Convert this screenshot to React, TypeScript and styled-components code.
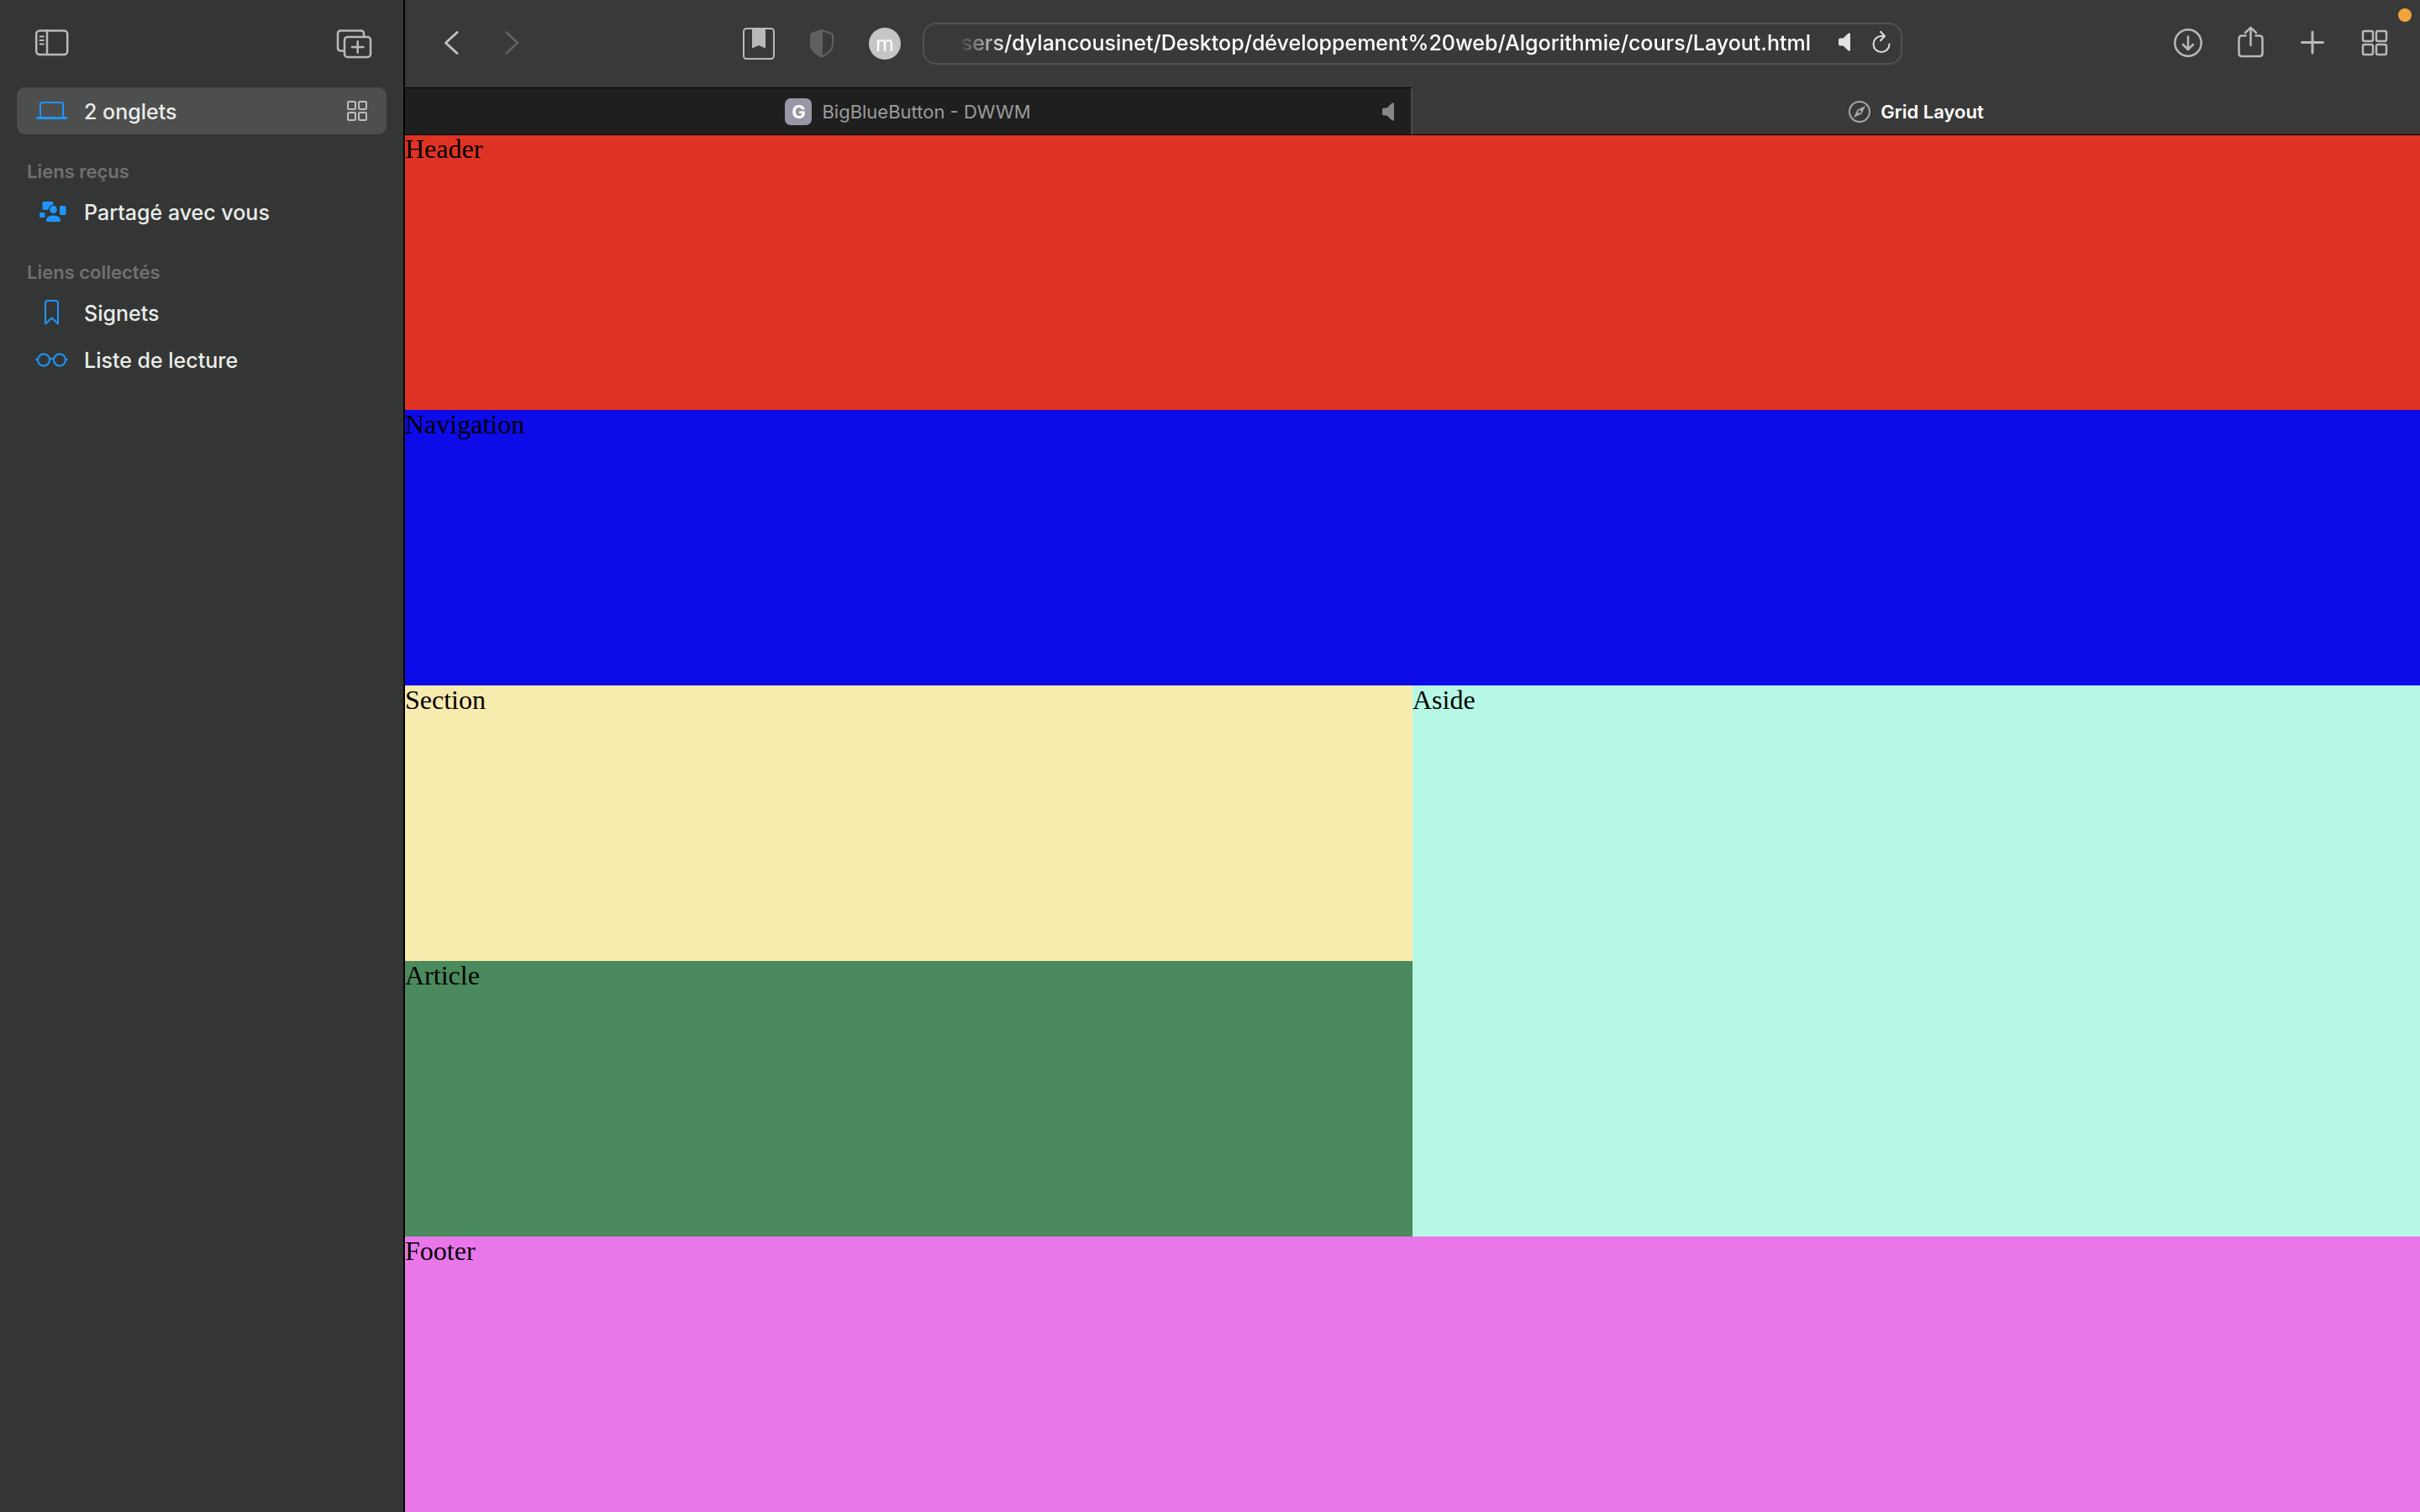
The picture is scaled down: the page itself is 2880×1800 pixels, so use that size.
import React from "react";
import styled, { createGlobalStyle } from "styled-components";

const sans = `Inter, "Liberation Sans", sans-serif`;
const serif = `"Liberation Serif", "Times New Roman", serif`;

const GlobalStyle = createGlobalStyle`
  * { box-sizing: border-box; }
  body { margin: 0; background: #343635; font-family: ${sans}; }
  button { appearance: none; border: 0; padding: 0; background: none; font: inherit; }
  a { color: inherit; text-decoration: none; }
  svg { display: block; flex: none; overflow: visible; }
`;

const Window = styled.div`
  display: grid;
  grid-template-columns: 482px minmax(0, 1fr);
  min-height: 100vh;
`;

const Sidebar = styled.aside`
  border-right: 2px solid #000;
  background: #343635;
  color: #ebecea;
`;

const SidebarTools = styled.div`
  display: flex;
  align-items: center;
  justify-content: space-between;
  height: 104px;
  padding: 0 37px 0 42px;
`;

const SidebarRow = styled.div<{ $selected?: boolean }>`
  display: flex;
  align-items: center;
  height: 56px;
  margin: 0 20px;
  padding: 0 23px 0 22px;
  border-radius: 10px;
  background: ${(p) => (p.$selected ? "#4d4f4e" : "transparent")};
`;

const RowLink = styled.a`
  display: flex;
  flex: 1;
  align-items: center;
  gap: 18px;
  font-size: 25px;
  line-height: 32px;
  font-weight: 500;
`;

const RowLabel = styled.span`
  padding-top: 2px;
`;

const SectionTitle = styled.h2`
  margin: 24px 0 0;
  padding: 0 32px;
  font-size: 22px;
  line-height: 40px;
  font-weight: 600;
  color: #6f716f;
`;

const Main = styled.div`
  display: flex;
  flex-direction: column;
  min-width: 0;
`;

const Toolbar = styled.header`
  display: grid;
  grid-template-columns: minmax(0, 1fr) minmax(0, 1166px) minmax(0, 1fr);
  align-items: center;
  height: 104px;
  background: #393939;
  position: relative;
`;

const LeftTools = styled.div`
  display: flex;
  justify-content: space-between;
  padding: 0 25px 0 35px;
`;

const RightTools = styled.div`
  display: flex;
  justify-content: flex-end;
  gap: 34px;
  padding-right: 34px;
`;

const ToolGroup = styled.div<{ $gap: number }>`
  display: flex;
  gap: ${(p) => p.$gap}px;
`;

const ToolButton = styled.button<{ $color?: string }>`
  display: flex;
  color: ${(p) => p.$color ?? "#b9b9b9"};
`;

const ProfileButton = styled.button`
  width: 38px;
  height: 38px;
  margin: 1px;
  border-radius: 50%;
  background: #c6c6c6;
  color: #fff;
  font-size: 25px;
  line-height: 32px;
  text-align: center;
`;

const AddressField = styled.form`
  display: flex;
  align-items: center;
  height: 50px;
  padding: 0 8px 0 36px;
  border: 2px solid #515151;
  border-radius: 16px;
`;

const AddressInput = styled.input`
  flex: 1;
  min-width: 0;
  height: 46px;
  padding: 0 0 2px;
  border: 0;
  outline: 0;
  background: none;
  color: #fff;
  font-family: ${sans};
  font-size: 25px;
  font-weight: 500;
  text-align: right;
  mask-image: linear-gradient(to right, transparent 4px, #000 64px);
`;

const AddressTools = styled.div`
  display: flex;
  align-items: center;
  gap: 22px;
  padding: 0 0 4px 33px;
`;

const RecordingDot = styled.span`
  position: absolute;
  top: 10px;
  right: 10px;
  width: 16px;
  height: 16px;
  border-radius: 50%;
  background: #f2a33c;
`;

const Tabs = styled.nav`
  display: grid;
  grid-template-columns: repeat(2, minmax(0, 1fr));
  height: 56px;
`;

const Tab = styled.div<{ $active?: boolean }>`
  display: grid;
  grid-template-columns: 34px minmax(0, 1fr) 34px;
  align-items: center;
  border-top: 1px solid ${(p) => (p.$active ? "#393939" : "#000")};
  border-right: ${(p) => (p.$active ? "0" : "2px solid #4b4b4b")};
  background: ${(p) => (p.$active ? "#393939" : "#1f1f1f")};
`;

const TabLink = styled.a<{ $active?: boolean }>`
  grid-column: 2;
  display: flex;
  align-items: center;
  justify-content: center;
  gap: 12px;
  color: ${(p) => (p.$active ? "#fff" : "#9b9b9b")};
  font-size: 22px;
  line-height: 32px;
  font-weight: ${(p) => (p.$active ? 600 : 400)};
`;

const Favicon = styled.span`
  width: 32px;
  height: 32px;
  border-radius: 7px;
  background: #9897a5;
  color: #fff;
  font-size: 22px;
  font-weight: 700;
  text-align: center;
`;

const Page = styled.main`
  flex: 1;
  display: grid;
  grid-template-columns: repeat(2, minmax(0, 1fr));
  grid-template-rows: repeat(5, minmax(0, 1fr));
  grid-template-areas:
    "header header"
    "nav nav"
    "section aside"
    "article aside"
    "footer footer";
  color: #000;
  font-family: ${serif};
  font-size: 32px;
  line-height: 34px;
`;

const Area = styled.section<{ $area: string; $color: string }>`
  grid-area: ${(p) => p.$area};
  background: ${(p) => p.$color};
`;

const TopArea = styled(Area)`
  box-shadow: inset 0 1px 0 #000;
`;

type IconProps = { children: React.ReactNode; w?: number; h?: number; stroke?: number };

function Icon({ children, w = 40, h = 40, stroke = 2 }: IconProps) {
  return (
    <svg
      width={w}
      height={h}
      viewBox={`0 0 ${w} ${h}`}
      fill="none"
      stroke="currentColor"
      strokeWidth={stroke}
      strokeLinecap="round"
      strokeLinejoin="round"
      aria-hidden="true"
    >
      {children}
    </svg>
  );
}

const Speaker = () => (
  <Icon w={14} h={22}>
    <path d="M0 8.500Q0 6.500 2 6.500H5.500L11.500 .8Q14 -.6 14 2V20Q14 22.600 11.500 21.200L5.500 15.500H2Q0 15.500 0 13.500Z" fill="currentColor" stroke="none" />
  </Icon>
);

const blue = "#1e95ff";

const LaptopIcon = () => (
  <Icon>
    <path d="M6 28V12.500q0-2.500 2.500-2.500H30.500q2.500 0 2.500 2.500V28" stroke={blue} />
    <path d="M2.500 28.500H36.500" stroke={blue} strokeWidth={3} />
  </Icon>
);

const SharedIcon = () => (
  <Icon>
    <g fill={blue} stroke="none">
      <path d="M10 8H20q1.500 0 1.500 1.500V11.500Q16.500 12 15.500 17.800H10q-1.500 0-1.500-1.500V9.500Q8.500 8 10 8Z" />
      <rect x="5" y="21" width="6.500" height="6" rx="1.500" />
      <rect x="29" y="13" width="7.500" height="11" rx="1.500" />
      <ellipse cx="21.500" cy="17.500" rx="4.300" ry="4.700" />
      <path d="M13 30.500C13 26.500 17 24.500 21.500 24.500S30 26.500 30 30.500Q30 32 28.500 32H14.500Q13 32 13 30.500Z" />
    </g>
  </Icon>
);

const BookmarkIcon = () => (
  <Icon>
    <path d="M12 33.500V9q0-3 3-3H24q3 0 3 3V33.500L19.500 26.500Z" stroke={blue} />
  </Icon>
);

const GlassesIcon = () => (
  <Icon>
    <g stroke={blue}>
      <circle cx="10" cy="20.500" r="7" />
      <circle cx="29" cy="20.500" r="7" />
      <path d="M17 19.500Q19.500 18 22 19.500M3 20H1M36 20H38" />
    </g>
  </Icon>
);

export default function App() {
  return (
    <>
      <GlobalStyle />
      <Window>
        <Sidebar>
          <SidebarTools>
            <ToolButton aria-label="Barre latérale">
              <Icon stroke={2.5}>
                <rect x="1.200" y="4.500" width="37" height="28.500" rx="4" />
                <path d="M14 4.500V33" />
                <path d="M5.500 11.500H10M5.500 16H10M5.500 20.500H10" strokeWidth={1.8} />
              </Icon>
            </ToolButton>
            <ToolButton aria-label="Nouveau groupe d’onglets">
              <Icon w={42} stroke={2.5}>
                <path d="M8 28.500H4.500q-3.500 0-3.500-3.500V8q0-3.500 3.500-3.500H28.500q3.500 0 3.500 3.500V11" />
                <rect x="9" y="12" width="31" height="24" rx="3.500" />
                <path d="M18 24H31.500M24.700 17.300V30.700" />
              </Icon>
            </ToolButton>
          </SidebarTools>
          <SidebarRow $selected>
            <RowLink href="#onglets"><LaptopIcon /><RowLabel>2 onglets</RowLabel></RowLink>
            <ToolButton $color="#bcbdbc" aria-label="Vue d’ensemble">
              <Icon w={24} h={24}>
                <rect x="1" y="1" width="9" height="9" rx="1.500" />
                <rect x="14" y="1" width="9" height="9" rx="1.500" />
                <rect x="1" y="14" width="9" height="9" rx="1.500" />
                <rect x="14" y="14" width="9" height="9" rx="1.500" />
              </Icon>
            </ToolButton>
          </SidebarRow>
          <SectionTitle>Liens reçus</SectionTitle>
          <SidebarRow>
            <RowLink href="#partage"><SharedIcon /><RowLabel>Partagé avec vous</RowLabel></RowLink>
          </SidebarRow>
          <SectionTitle>Liens collectés</SectionTitle>
          <SidebarRow>
            <RowLink href="#signets"><BookmarkIcon /><RowLabel>Signets</RowLabel></RowLink>
          </SidebarRow>
          <SidebarRow>
            <RowLink href="#lecture"><GlassesIcon /><RowLabel>Liste de lecture</RowLabel></RowLink>
          </SidebarRow>
        </Sidebar>

        <Main>
          <Toolbar>
            <LeftTools>
              <ToolGroup $gap={32}>
                <ToolButton $color="#c0c0c0" aria-label="Précédent">
                  <Icon stroke={3}><path d="M27 6.500L13.500 19L27 31.500" /></Icon>
                </ToolButton>
                <ToolButton $color="#606060" aria-label="Suivant">
                  <Icon stroke={3}><path d="M13.500 6.500L27 19L13.500 31.500" /></Icon>
                </ToolButton>
              </ToolGroup>
              <ToolGroup $gap={35}>
                <ToolButton aria-label="Enregistrer">
                  <Icon stroke={2}>
                    <rect x="2" y="2" width="36" height="36" rx="3.500" />
                    <path d="M12 2H28V25.500L20 22L12 25.500Z" fill="currentColor" stroke="none" />
                  </Icon>
                </ToolButton>
                <ToolButton $color="#5f5f5f" aria-label="Rapport de confidentialité">
                  <Icon>
                    <path d="M20 4L31.500 8Q33 8.600 33 10V20C33 28 27 32 20 35.500C13 32 7 28 7 20V10Q7 8.600 8.500 8Z" />
                    <path d="M20 4V35.500C13 32 7 28 7 20V10Q7 8.600 8.500 8Z" fill="currentColor" />
                  </Icon>
                </ToolButton>
                <ProfileButton>m</ProfileButton>
              </ToolGroup>
            </LeftTools>
            <AddressField>
              <AddressInput
                aria-label="Adresse"
                defaultValue="sers/dylancousinet/Desktop/développement%20web/Algorithmie/cours/Layout.html"
              />
              <AddressTools>
                <ToolButton type="button" $color="#e2e2e2" aria-label="Couper le son"><Speaker /></ToolButton>
                <ToolButton type="button" $color="#dedede" aria-label="Actualiser">
                  <Icon w={30} h={26}>
                    <path d="M17 6H15A9.500 9.500 0 1 0 24.500 15.500" />
                    <path d="M14 .8L19 6L14 11.200" />
                  </Icon>
                </ToolButton>
              </AddressTools>
            </AddressField>
            <RightTools>
              <ToolButton aria-label="Téléchargements">
                <Icon stroke={2.5}>
                  <circle cx="20" cy="19" r="15.700" />
                  <path d="M20 11.500V26.500M14 21L20 27L26 21" />
                </Icon>
              </ToolButton>
              <ToolButton aria-label="Partager">
                <Icon stroke={2.5}>
                  <path d="M14.500 10.500H10q-3.500 0-3.500 3.500V31.500q0 3.500 3.500 3.500H31q3.500 0 3.500-3.500V14q0-3.500-3.500-3.500H26.500" />
                  <path d="M20.500 22V.8M14 7L20.500 .8L27 7" />
                </Icon>
              </ToolButton>
              <ToolButton aria-label="Nouvel onglet">
                <Icon stroke={3}><path d="M7.500 18.500H32.500M20 6V31" /></Icon>
              </ToolButton>
              <ToolButton aria-label="Tous les onglets">
                <Icon stroke={2.5}>
                  <rect x="6" y="5" width="12" height="12" rx="2" />
                  <rect x="22" y="5" width="12" height="12" rx="2" />
                  <rect x="6" y="21" width="12" height="12" rx="2" />
                  <rect x="22" y="21" width="12" height="12" rx="2" />
                </Icon>
              </ToolButton>
            </RightTools>
            <RecordingDot />
          </Toolbar>

          <Tabs>
            <Tab>
              <TabLink href="#bbb"><Favicon>G</Favicon>BigBlueButton - DWWM</TabLink>
              <ToolButton $color="#878787" aria-label="Couper l’onglet"><Speaker /></ToolButton>
            </Tab>
            <Tab $active>
              <TabLink href="#grid" $active>
                <Icon w={26} h={26}>
                  <circle cx="13" cy="13" r="12" stroke="#a8a8a8" />
                  <path fillRule="evenodd" d="M20 6L15.500 15.500L6 20L10.500 10.500ZM13 11.200A1.800 1.800 0 1 0 13 14.800A1.800 1.800 0 1 0 13 11.200Z" fill="#a8a8a8" stroke="none" />
                </Icon>
                Grid Layout
              </TabLink>
            </Tab>
          </Tabs>

          <Page>
            <TopArea $area="header" $color="#df3325">Header</TopArea>
            <Area $area="nav" $color="#0d0be8">Navigation</Area>
            <Area $area="section" $color="#f7ebae">Section</Area>
            <Area as="aside" $area="aside" $color="#b7f7e5">Aside</Area>
            <Area as="article" $area="article" $color="#4b8a5c">Article</Area>
            <Area as="footer" $area="footer" $color="#ea77ea">Footer</Area>
          </Page>
        </Main>
      </Window>
    </>
  );
}
